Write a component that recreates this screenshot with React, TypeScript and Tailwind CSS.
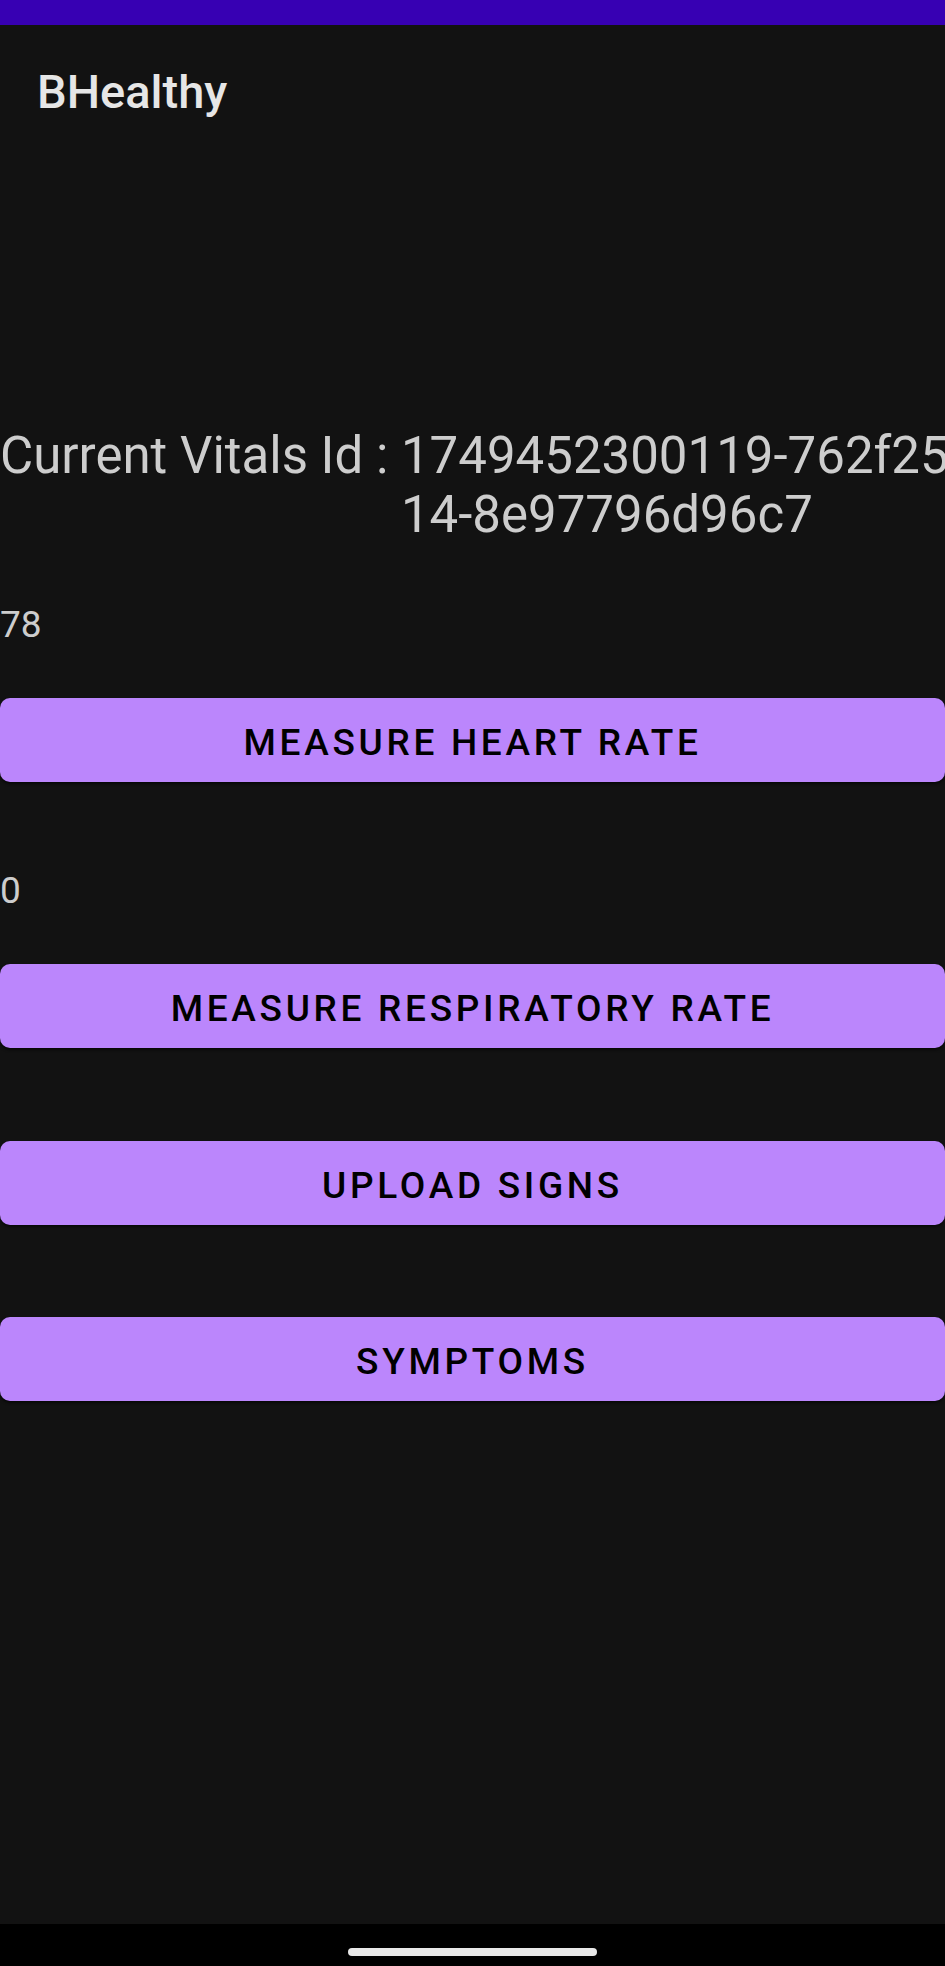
import React from "react";

function ActionButton({ label, className = "" }: { label: string; className?: string }) {
  return (
    <button
      type="button"
      className={`w-full h-[84px] rounded-[10px] bg-[#bb86fc] text-black text-[37px] leading-[43px] font-medium tracking-[0.1em] uppercase flex items-center justify-center pt-[4px] shadow-[0_2px_3px_rgba(0,0,0,0.6)] ${className}`}
    >
      {label}
    </button>
  );
}

export default function App() {
  return (
    <div className="w-[945px] h-[1966px] bg-[#121212] flex flex-col overflow-hidden font-['Roboto',sans-serif]">
      <div className="h-[25px] shrink-0 bg-[#3700b3]" />
      <main className="flex-1 flex flex-col">
        <header className="pt-[39px] pl-[37px]">
          <h1 className="text-[47px] leading-[55px] font-medium text-[#e6e6e6]">BHealthy</h1>
        </header>

        <div className="mt-[307px] flex text-[51px] leading-[59px] text-[#cdcdcd] whitespace-nowrap">
          <span className="whitespace-pre">Current Vitals Id : </span>
          <div className="flex flex-col">
            <span>1749452300119-762f25</span>
            <span>14-8e97796d96c7</span>
          </div>
        </div>

        <p className="mt-[59px] text-[37px] leading-[43px] text-[#cdcdcd]">78</p>
        <ActionButton label="Measure Heart Rate" className="mt-[52px]" />

        <p className="mt-[87px] text-[37px] leading-[43px] text-[#cdcdcd]">0</p>
        <ActionButton label="Measure Respiratory Rate" className="mt-[52px]" />

        <ActionButton label="Upload Signs" className="mt-[93px]" />
        <ActionButton label="Symptoms" className="mt-[92px]" />
      </main>
      <div className="h-[42px] shrink-0 bg-black flex items-start justify-center pt-[24px]">
        <div className="w-[249px] h-[8px] rounded-full bg-[#e8e8e8]" />
      </div>
    </div>
  );
}
